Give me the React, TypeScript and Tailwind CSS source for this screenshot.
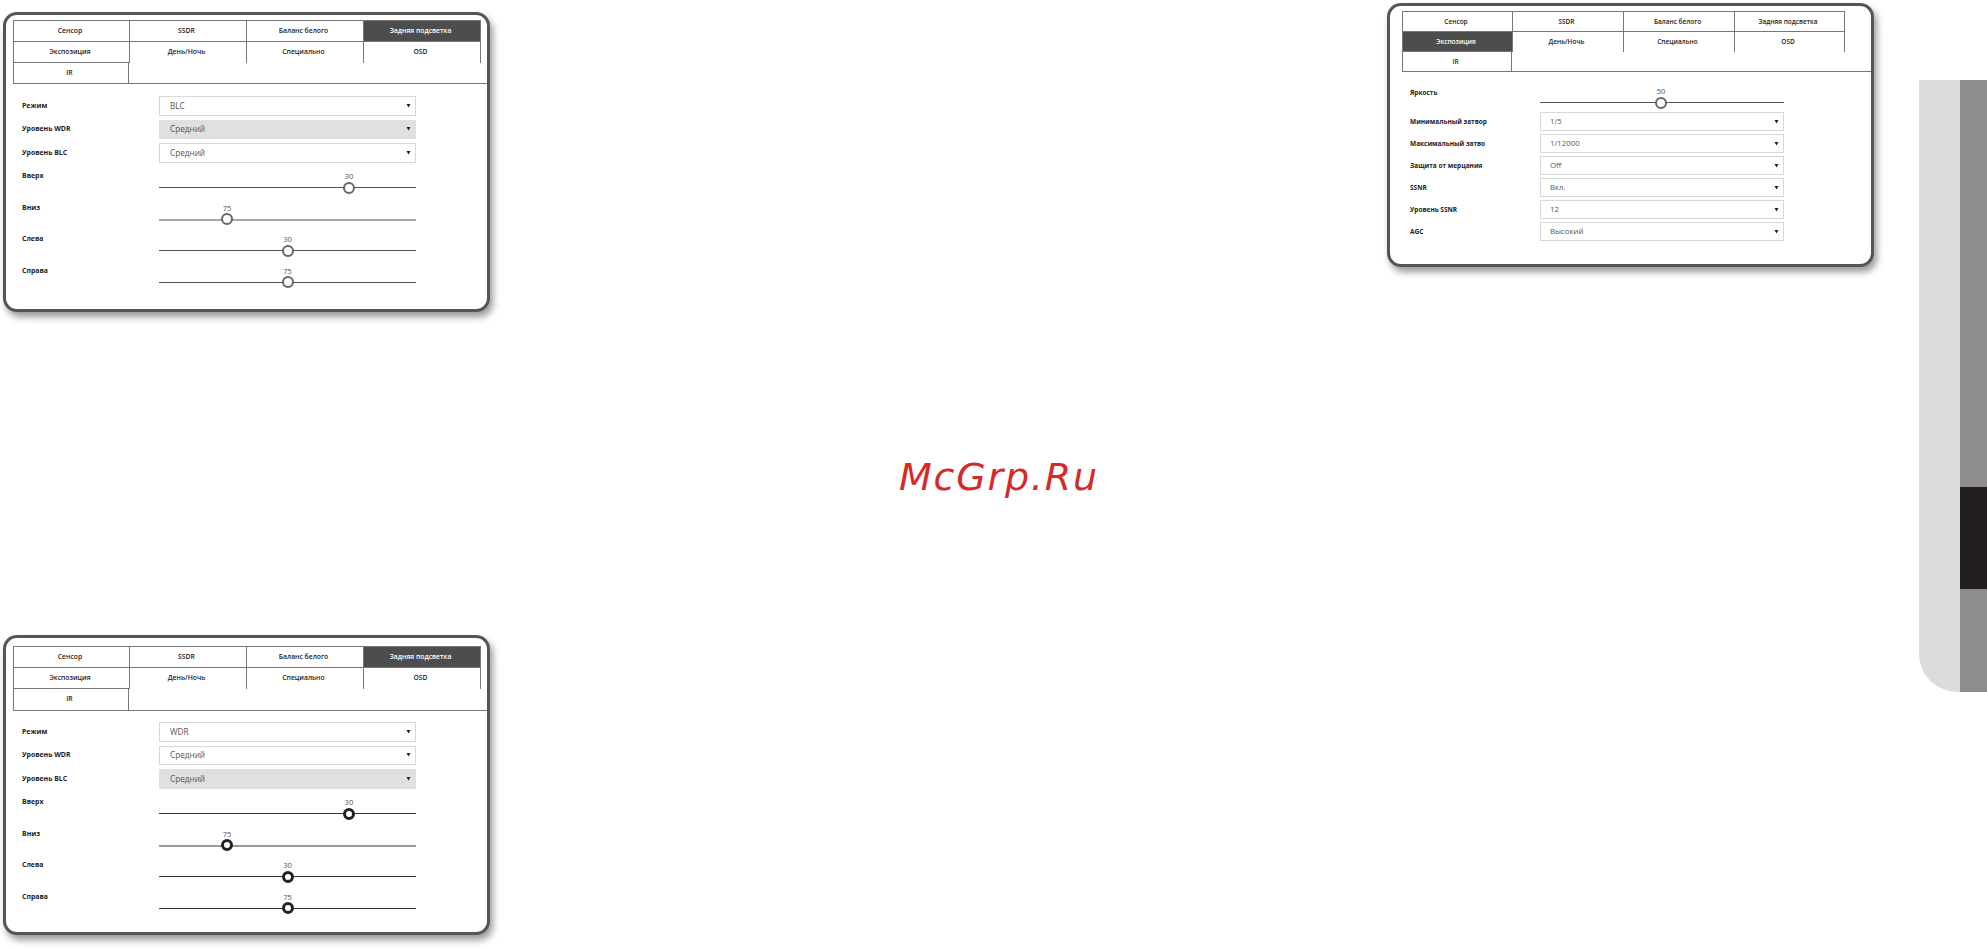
const tabs = [
  ['Сенсор', 'SSDR', 'Баланс белого', 'Задняя подсветка'],
  ['Экспозиция', 'День/Ночь', 'Специально', 'OSD'],
  ['IR'],
];

function Tabs({ active, grid, text }: { active: string; grid: string; text: string }) {
  return (
    <div className={`grid border-t border-l border-[#777] ${grid}`}>
      {tabs.flat().map((name, i) => {
        const isActive = name === active;
        const col = i % 4;
        const row = Math.floor(i / 4);
        return (
          <div
            key={name}
            className={`flex items-center justify-center pr-[3px] font-semibold border-[#777] ${text} ${
              isActive ? 'bg-[#4d4d4d] text-white' : 'text-[#222]'
            } ${col > 0 ? 'border-l' : ''} ${row === 0 || (col === 0 && row === 1) ? 'border-b' : ''} ${
              row === 2 ? 'border-r' : ''
            } ${col === 3 ? 'border-r' : ''}`}
          >
            {name}
          </div>
        );
      })}
    </div>
  );
}

function Label({ children, text }: { children: string; text: string }) {
  return <div className={`font-bold text-[#222] leading-[12px] whitespace-nowrap ${text}`}>{children}</div>;
}

function Select({ value, disabled, size }: { value: string; disabled?: boolean; size: string }) {
  return (
    <div
      className={`flex items-center justify-between pr-[4px] border text-[#555] ${size} ${
        disabled ? 'bg-[#e0e0e0] border-[#e0e0e0]' : 'bg-white border-[#d8d8d8]'
      }`}
    >
      <span>{value}</span>
      <svg width="5" height="5" viewBox="0 0 5 5" className="mb-[1px]">
        <polygon points="0.5,1 4.5,1 2.5,4.5" fill="#222" />
      </svg>
    </div>
  );
}

function Slider({
  value,
  pos,
  track,
  thumb,
}: {
  value: string;
  pos: number;
  track: string;
  thumb: string;
}) {
  return (
    <div className="relative h-full">
      <div
        className="absolute top-[1px] -translate-x-1/2 text-[7.6px] leading-[12px] text-[#555]"
        style={{ left: `${pos * 100}%` }}
      >
        {value}
      </div>
      <div className={`absolute top-[18px] left-0 right-0 ${track}`} />
      <div
        className={`absolute top-[18.5px] w-[12px] h-[12px] -translate-x-1/2 -translate-y-1/2 rounded-full bg-white ${thumb}`}
        style={{ left: `${pos * 100}%` }}
      />
    </div>
  );
}

function BacklightPanel({
  mode,
  wdrOff,
  thumb,
  line,
  thick,
  tabsTop,
  rows,
  formTop,
  top,
}: {
  mode: string;
  wdrOff: boolean;
  thumb: string;
  line: string;
  thick: string;
  tabsTop: string;
  rows: string;
  formTop: string;
  top: string;
}) {
  const selects = [
    { label: 'Режим', value: mode, disabled: false },
    { label: 'Уровень WDR', value: 'Средний', disabled: wdrOff },
    { label: 'Уровень BLC', value: 'Средний', disabled: !wdrOff },
  ];
  const sliders = [
    { label: 'Вверх', value: '30', pos: 0.739, track: line },
    { label: 'Вниз', value: '75', pos: 0.265, track: thick },
    { label: 'Слева', value: '30', pos: 0.5, track: line },
    { label: 'Справа', value: '75', pos: 0.5, track: line },
  ];
  return (
    <div
      className={`w-[487px] h-[300px] rounded-[14px] border-[3px] border-[#555] bg-white shadow-[3px_5px_7px_rgba(0,0,0,0.4)] ${top}`}
    >
      <div className={`ml-[7px] border-b border-[#777] ${tabsTop}`}>
        <Tabs
          active="Задняя подсветка"
          text="text-[6.8px]"
          grid={`w-[468px] grid-cols-[115px_117px_117px_118px] ${rows}`}
        />
      </div>
      <div className={`ml-[16px] flex flex-col ${formTop}`}>
        {selects.map((s) => (
          <div key={s.label} className="flex items-center mb-[4px]">
            <div className="w-[137px]">
              <Label text="text-[6.9px]">{s.label}</Label>
            </div>
            <Select value={s.value} disabled={s.disabled} size="w-[257px] h-[19.5px] pl-[10px] text-[8.2px]" />
          </div>
        ))}
        <div className="mt-[2.5px]">
          {sliders.map((s) => (
            <div key={s.label} className="flex h-[31.5px]">
              <div className="w-[137px] pt-[1px]">
                <Label text="text-[6.9px]">{s.label}</Label>
              </div>
              <div className="w-[257px]">
                <Slider value={s.value} pos={s.pos} track={s.track} thumb={thumb} />
              </div>
            </div>
          ))}
        </div>
      </div>
    </div>
  );
}

function ExposurePanel() {
  const rows = [
    { label: 'Минимальный затвор', value: '1/5' },
    { label: 'Максимальный затво', value: '1/12000' },
    { label: 'Защита от мерцания', value: 'Off' },
    { label: 'SSNR', value: 'Вкл.' },
    { label: 'Уровень SSNR', value: '12' },
    { label: 'AGC', value: 'Высокий' },
  ];
  return (
    <div className="w-[487px] h-[264px] mt-[3px] rounded-[14px] border-[3px] border-[#555] bg-white shadow-[3px_5px_7px_rgba(0,0,0,0.4)]">
      <div className="ml-[12px] mt-[5px] border-b border-[#777]">
        <Tabs
          active="Экспозиция"
          text="text-[6.5px]"
          grid="w-[443px] grid-cols-[109px_111px_111px_111px] grid-rows-[20px_20px_19px]"
        />
      </div>
      <div className="ml-[20px] mt-[12px] flex flex-col">
        <div className="flex h-[28px]">
          <div className="w-[130px] pt-[3px]">
            <Label text="text-[6.5px]">Яркость</Label>
          </div>
          <div className="w-[244px]">
            <Slider value="50" pos={0.496} track="h-px bg-[#555]" thumb="border-[2.5px] border-[#666]" />
          </div>
        </div>
        {rows.map((r) => (
          <div key={r.label} className="flex items-center mb-[3px]">
            <div className="w-[130px] pt-[1px]">
              <Label text="text-[6.5px]">{r.label}</Label>
            </div>
            <Select value={r.value} size="w-[244px] h-[19px] pl-[9px] text-[7.8px]" />
          </div>
        ))}
      </div>
    </div>
  );
}

export default function App() {
  return (
    <div
      className="relative flex w-[1987px] h-[950px] overflow-hidden bg-white"
      style={{ fontFamily: '"Open Sans", "Noto Sans", sans-serif' }}
    >
      <div className="ml-[3px] w-[487px] pt-[12px]">
        <BacklightPanel
          mode="BLC"
          wdrOff={true}
          thumb="border-[2.5px] border-[#666]"
          line="h-px bg-[#555]"
          thick="h-[2px] bg-[#aaa]"
          tabsTop="mt-[5px]"
          rows="grid-rows-[21px_21px_20px]"
          formTop="mt-[12px]"
          top=""
        />
        <BacklightPanel
          mode="WDR"
          wdrOff={false}
          thumb="border-[3px] border-[#222]"
          line="h-px bg-[#333]"
          thick="h-[2px] bg-[#999]"
          tabsTop="mt-[8px]"
          rows="grid-rows-[21px_21px_21px]"
          formTop="mt-[11px]"
          top="mt-[323px]"
        />
      </div>

      <div className="ml-[897px] w-[487px]">
        <ExposurePanel />
      </div>

      {/* side tab */}
      <div className="ml-[45px] mt-[80px] h-[612px] flex">
        <div className="w-[41px] bg-[#dcdcdc] rounded-bl-[38px]" />
        <div className="w-[28px] flex flex-col bg-[#8e8c8d]">
          <div className="h-[407px]" />
          <div className="h-[102px] bg-[#231f20]" />
        </div>
      </div>

      {/* watermark */}
      <div
        className="absolute left-[899px] top-[452px] text-[38px] italic leading-[50px] tracking-[1.8px] text-[#d42a2a]"
        style={{ fontFamily: '"DejaVu Sans", sans-serif' }}
      >
        McGrp.Ru
      </div>
    </div>
  );
}
